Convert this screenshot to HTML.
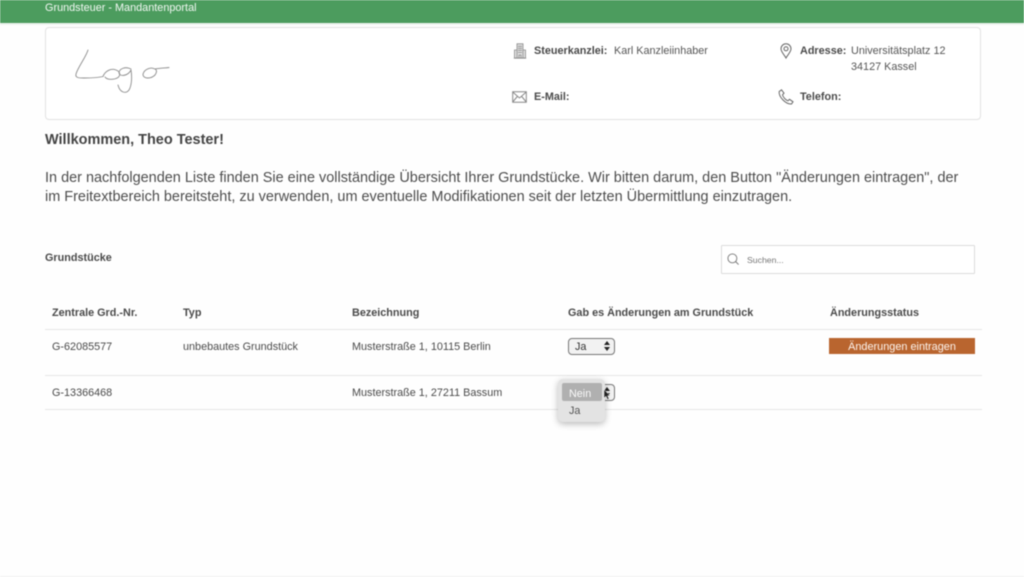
<!DOCTYPE html>
<html lang="de">
<head>
<meta charset="utf-8">
<title>Grundsteuer - Mandantenportal</title>
<style>
html,body{margin:0;padding:0;width:1024px;height:577px;overflow:hidden;background:#fefefe}
body{font-family:"Liberation Sans",Arial,sans-serif;color:#4a4a4a;position:relative;filter:blur(.4px)}
.a{position:absolute;white-space:nowrap}
.b{font-weight:bold}
.s{font-size:10.830px;line-height:14px}
.line{position:absolute;height:1px;background:#e6e6e6;left:45px;width:937px}
svg{position:absolute;overflow:visible}
</style>
</head>
<body>
<div class="a" style="left:0;top:0;width:1024px;height:23px;background:#4c9c5e"></div>
<div class="a" style="left:0;top:23px;width:1024px;height:2px;background:#eef3ef"></div>
<div class="a" style="left:45px;top:1.500px;font-size:10.860px;line-height:13px;color:#f2f8f3">Grundsteuer - Mandantenportal</div>

<div class="a" style="left:45px;top:26.500px;width:934px;height:91px;border:1.500px solid #e2e2e2;border-radius:4px;background:#fff"></div>

<svg style="left:0;top:0" width="200" height="110" fill="none" stroke="#8c8c8c" stroke-width=".9" stroke-linecap="round" stroke-linejoin="round">
<path d="M88 50C86 57 78 67 76 74C75 78 79 78 84 78C90 78 97 78 103 76.500"/>
<path d="M103 76.500C105 71 111 68 116 70C120 71.500 121 75 118 77.500C114 80 107 80 105 77"/>
<path d="M131 69C125 66 119 69 119 73C120 77 128 76 131 70C132 76 132 85 129 90C126 94 120 93 118 85"/>
<path d="M155 69C149 66 143 71 143 75C144 79 151 79 155 75C157 72 157 70 155 69C160 68 165 68 169 67.500"/>
</svg>

<!-- Building icon -->
<svg style="left:513px;top:43px" width="14" height="16" viewBox="0 0 14 16" fill="#e2e2e2" stroke="#8a8a8a" stroke-width=".8">
<path d="M1.500 7H12.500V15H1.500Z"/>
<path d="M4 .8H10V15H4Z"/>
<path d="M5 3.300H9M5 5.300H9M5 7.300H9M5 9.500H9M6 15V12H8V15M.8 15.200H13.200" fill="none"/>
</svg>
<div class="a b s" style="left:534px;top:44px">Steuerkanzlei:</div>
<div class="a s" style="left:614px;top:44px;color:#555">Karl Kanzleiinhaber</div>

<!-- Mail icon -->
<svg style="left:512px;top:91px" width="15" height="12" viewBox="0 0 15 12" fill="none" stroke="#888" stroke-width="1">
<path d="M.7 .8H14.300V11.200H.7ZM.7 1L7.500 7L14.300 1M.7 11L5.300 5.500M14.300 11L9.700 5.500"/>
</svg>
<div class="a b s" style="left:534px;top:90px">E-Mail:</div>

<!-- Pin icon -->
<svg style="left:780px;top:43px" width="12" height="16" viewBox="0 0 12 16" fill="none" stroke="#666" stroke-width="1">
<path d="M6 15C4.500 12 1 9 1 5.800A5 5 0 0 1 11 5.800C11 9 7.500 12 6 15Z"/>
<circle cx="6" cy="5.800" r="2"/>
</svg>
<div class="a b s" style="left:800px;top:44px">Adresse:</div>
<div class="a s" style="left:851px;top:44px;color:#555">Universitätsplatz 12</div>
<div class="a s" style="left:851px;top:60px;color:#555">34127 Kassel</div>

<!-- Phone icon -->
<svg style="left:778px;top:89px" width="16" height="16" viewBox="0 0 16 16" fill="none" stroke="#666" stroke-width="1">
<path d="M1.200 2.500L3.500 .8L6 4.200L4.500 5.800C5 8 7.500 11 10 11.800L11.500 10.300L15 12.800L13.500 15C8 15.500 .5 8 1.200 2.500Z"/>
</svg>
<div class="a b s" style="left:800px;top:90px">Telefon:</div>

<div class="a b" style="left:45px;top:132px;font-size:14.470px;line-height:17px;color:#444">Willkommen, Theo Tester!</div>
<div class="a" style="left:45px;top:169px;font-size:14.460px;line-height:19px;color:#4d4d4d">In der nachfolgenden Liste finden Sie eine vollständige Übersicht Ihrer Grundstücke. Wir bitten darum, den Button "Änderungen eintragen", der<br>im Freitextbereich bereitsteht, zu verwenden, um eventuelle Modifikationen seit der letzten Übermittlung einzutragen.</div>

<div class="a b s" style="left:45px;top:251px">Grundstücke</div>

<div class="a" style="left:721px;top:245px;width:252px;height:27px;border:1.500px solid #dcdcdc;border-radius:1px;background:#fff"></div>
<svg style="left:727px;top:253px" width="13" height="13" viewBox="0 0 14 14" fill="none" stroke="#777" stroke-width="1">
<circle cx="5.800" cy="5.800" r="4.800"/><path d="M9.300 9.300L12.500 12.500"/>
</svg>
<div class="a" style="left:747px;top:254px;font-size:8.700px;line-height:12px;color:#777">Suchen...</div>

<div class="a b s" style="left:52px;top:306px">Zentrale Grd.-Nr.</div>
<div class="a b s" style="left:183px;top:306px">Typ</div>
<div class="a b s" style="left:352px;top:306px">Bezeichnung</div>
<div class="a b s" style="left:568px;top:306px">Gab es Änderungen am Grundstück</div>
<div class="a b s" style="left:830px;top:306px">Änderungsstatus</div>
<div class="line" style="top:329px"></div>

<div class="a s" style="left:52px;top:340px">G-62085577</div>
<div class="a s" style="left:183px;top:340px">unbebautes Grundstück</div>
<div class="a s" style="left:352px;top:340px">Musterstraße 1, 10115 Berlin</div>

<div class="a" style="left:568px;top:338px;width:45px;height:15px;border:1px solid #777;border-radius:4px;background:#f2f2f2"></div>
<div class="a" style="left:575px;top:340px;font-size:10.800px;line-height:14px;color:#333">Ja</div>
<svg style="left:604px;top:341px" width="6" height="10" viewBox="0 0 6 10" fill="#222"><path d="M3 0L6 4H0ZM3 10L0 6H6Z"/></svg>

<div class="a" style="left:829px;top:338px;width:146px;height:16px;background:#b9652f;color:#fdf5ef;font-size:10.900px;line-height:18px;text-align:center;overflow:hidden">Änderungen eintragen</div>
<div class="line" style="top:375px"></div>

<div class="a s" style="left:52px;top:386px">G-13366468</div>
<div class="a s" style="left:352px;top:386px">Musterstraße 1, 27211 Bassum</div>
<div class="line" style="top:409px"></div>

<div class="a" style="left:590px;top:384px;width:23px;height:15px;border:1px solid #777;border-radius:4px;background:#f2f2f2"></div>
<svg style="left:604px;top:387px" width="6" height="10" viewBox="0 0 6 10" fill="#222"><path d="M3 0L6 4H0ZM3 10L0 6H6Z"/></svg>

<div class="a" style="left:558px;top:379px;width:47px;height:43px;background:#e3e3e3;border-radius:5px;box-shadow:0 2px 7px rgba(0,0,0,.28)"></div>
<div class="a" style="left:562px;top:383px;width:40px;height:18px;background:#b0b0b0;border-radius:2px"></div>
<div class="a" style="left:569px;top:388px;font-size:10.800px;line-height:13px;color:#fafafa">Nein</div>
<div class="a" style="left:569px;top:405px;font-size:10.800px;line-height:13px;color:#555">Ja</div>

<svg style="left:603px;top:389px" width="8" height="12" viewBox="0 0 8 12"><path d="M1 .5V9L3 7.200L4.500 10.500L6 9.800L4.600 6.700H7Z" fill="#222" stroke="#eee" stroke-width=".5"/></svg>

<div class="a" style="left:0;top:576px;width:1024px;height:1px;background:#f0f0f0"></div>
</body>
</html>
